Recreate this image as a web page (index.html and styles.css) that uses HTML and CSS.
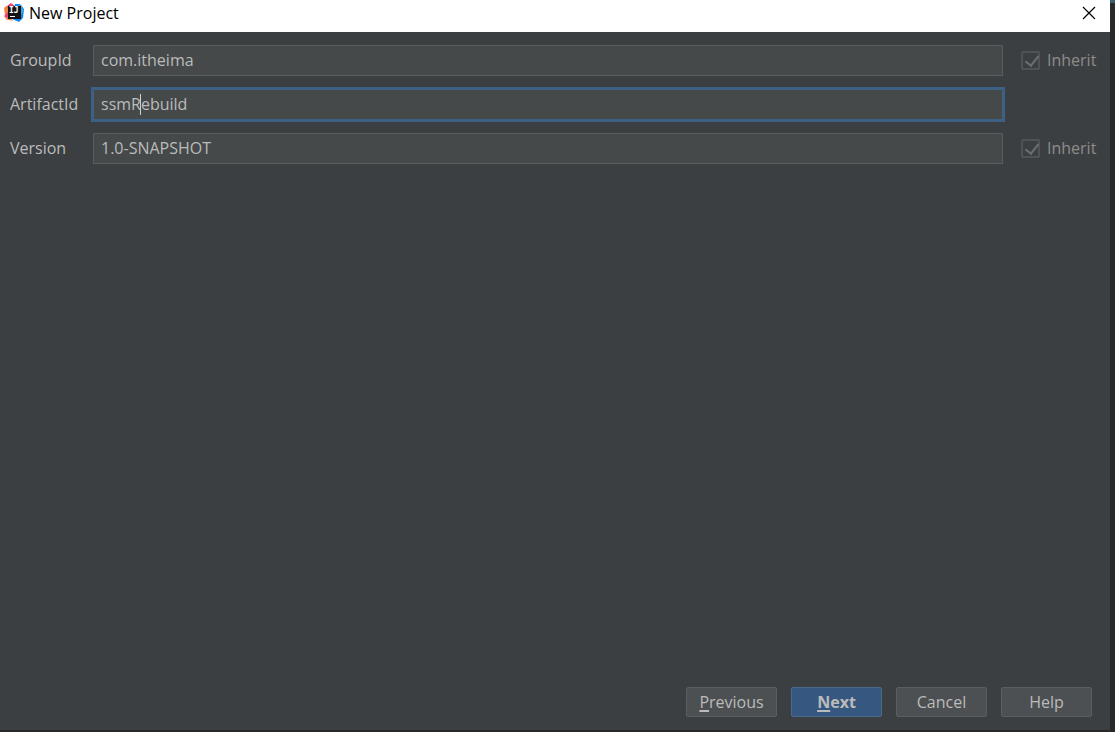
FILE: index.html
```html
<!DOCTYPE html>
<html lang="en">
<head>
<meta charset="utf-8">
<title>New Project</title>
<link rel="stylesheet" href="styles.css">
</head>
<body>
<main class="dialog">
  <header class="titlebar">
    <svg class="logo" viewBox="0 0 20 20" aria-hidden="true">
      <path fill="#f5843b" d="M0 5 2 3l6 2v6l-7 1z"/>
      <path fill="#ed3f6b" d="M3 3 7 0l4 3-6 6zM0 13l5-5 3 8-4 1z"/>
      <path fill="#f58a50" d="m1 16 4-3 4 5-4-1z"/>
      <path fill="#1485ec" d="m11 1 5 0 4 5-1 9-4 4-7-3z"/>
      <path fill="#30a9f3" d="m14 1 4 2 2 6-4 3z"/>
      <path fill="#161314" d="M4 3h13v13H4z"/>
      <text class="logo-text" x="5" y="10">IJ</text>
      <path fill="#fff" d="M6 13h5v1H6z"/>
    </svg>
    <h1 class="title">New Project</h1>
    <button class="close" type="button" aria-label="Close">
      <svg class="close-icon" viewBox="0 0 14 14" aria-hidden="true"><path d="m1 1 12 12M13 1 1 13"/></svg>
    </button>
  </header>
  <form class="form">
    <div class="fields">
      <label class="label" for="group">GroupId</label>
      <div class="field"><input class="input" id="group" type="text" value="com.itheima"></div>
      <label class="inherit"><input class="check" type="checkbox" checked disabled><span class="label">Inherit</span></label>
      <label class="label" for="artifact">ArtifactId</label>
      <div class="field field-active"><input class="input" id="artifact" type="text" value="ssmRebuild"><span class="caret"></span></div>
      <span></span>
      <label class="label" for="version">Version</label>
      <div class="field"><input class="input" id="version" type="text" value="1.0-SNAPSHOT"></div>
      <label class="inherit"><input class="check" type="checkbox" checked disabled><span class="label">Inherit</span></label>
    </div>
    <footer class="actions">
      <button class="button" type="button"><span class="key">P</span>revious</button>
      <button class="button button-primary" type="button"><span class="key">N</span>ext</button>
      <button class="button" type="button">Cancel</button>
      <button class="button" type="button">Help</button>
    </footer>
  </form>
</main>
</body>
</html>
```
FILE: styles.css
```css
* {
  box-sizing: border-box;
}

body {
  margin: 0;
  min-height: 100vh;
  display: flex;
  padding: 0 5px 2px 0;
  background: linear-gradient(#396071 3px, #292929 3px);
  font-family: "Open Sans", "Noto Sans", sans-serif;
  font-size: 16px;
  line-height: 20px;
}

.dialog {
  flex: 1;
  display: flex;
  flex-direction: column;
  background: #3c3f41;
  color: #bbbbbb;
}

.titlebar {
  height: 32px;
  display: flex;
  align-items: center;
  gap: 5px;
  padding: 0 14px 6px 4px;
  background: #ffffff;
  color: #000000;
}

.logo {
  width: 20px;
  height: 20px;
}

.logo-text {
  fill: #ffffff;
  font-family: "DejaVu Sans Mono", monospace;
  font-size: 8px;
  font-weight: 700;
}

.title {
  flex: 1;
  margin: 0;
  font-size: 16px;
  font-weight: 400;
}

.close {
  display: flex;
  padding: 0;
  border: 0;
  background: none;
}

.close-icon {
  width: 14px;
  height: 14px;
  fill: none;
  stroke: #000000;
  stroke-width: 1.2;
}

.form {
  flex: 1;
  display: flex;
  flex-direction: column;
  justify-content: space-between;
}

.fields {
  display: grid;
  grid-template-columns: 67px 1fr 74px;
  column-gap: 16px;
  row-gap: 13px;
  align-items: center;
  padding: 13px 15px 0 10px;
}

.label {
  padding-bottom: 2px;
  white-space: nowrap;
}

.field {
  position: relative;
  margin-right: 2px;
}

.input {
  display: block;
  width: 100%;
  height: 31px;
  padding: 0 7px 2px;
  border: 1px solid #5b5e5f;
  background: #45494a;
  color: #bbbbbb;
  font: inherit;
  outline: none;
}

.field-active .input {
  box-shadow: 0 0 0 2px #3d6185;
  border-color: #3d6185;
}

.caret {
  position: absolute;
  left: 47px;
  top: 5px;
  width: 1px;
  height: 21px;
  background: #d0d0d0;
}

.inherit {
  display: flex;
  align-items: center;
  gap: 7px;
  color: #8c8c8c;
}

.check {
  appearance: none;
  position: relative;
  flex: none;
  width: 19px;
  height: 19px;
  margin: 0;
  border: 2px solid #505355;
  border-radius: 2px;
}

.check:checked::after {
  content: "";
  position: absolute;
  left: 5px;
  top: 0;
  width: 6px;
  height: 11px;
  border: solid #6c6f70;
  border-width: 0 2px 2px 0;
  transform: rotate(38deg);
}

.actions {
  display: flex;
  justify-content: flex-end;
  gap: 14px;
  padding: 0 18px 13px;
}

.button {
  width: 91px;
  height: 30px;
  padding: 0;
  border: 1px solid #5b5e60;
  border-radius: 2px;
  background: #4c5052;
  color: #bbbbbb;
  font: inherit;
}

.button-primary {
  border-color: #4a698c;
  background: #365880;
  font-weight: 700;
}

.key {
  text-decoration: underline 2px;
  text-underline-offset: 2px;
}
```
